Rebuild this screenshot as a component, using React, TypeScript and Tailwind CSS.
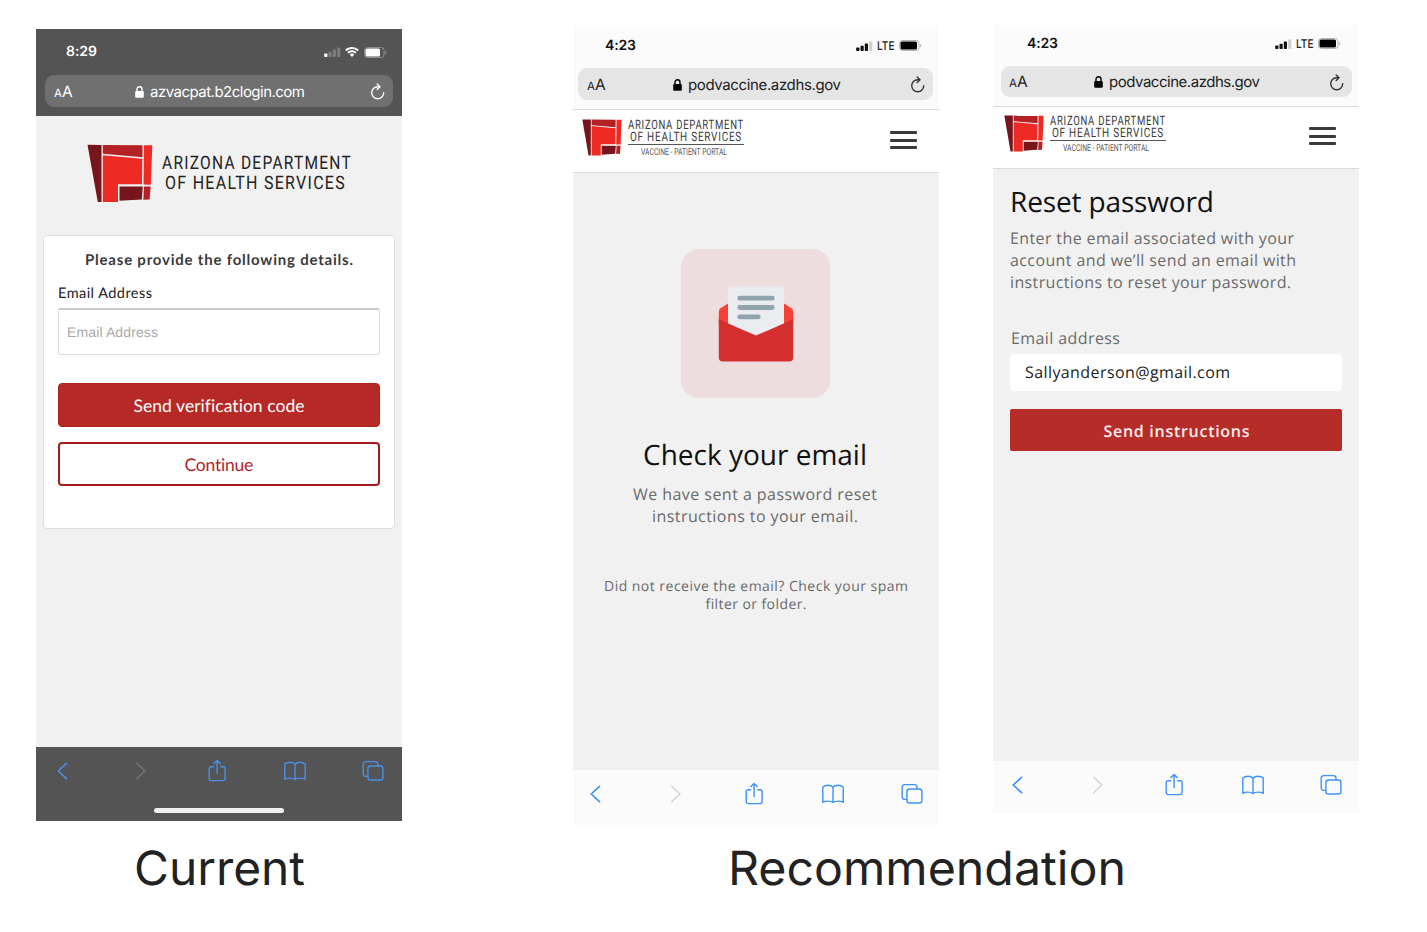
import { useLayoutEffect, useRef } from "react";
import type { ReactNode } from "react";

/** One line of text whose tracking (or horizontal scale) is set so that it fills a given width. */
function FitLine({
  width,
  stretch = false,
  className = "",
  children,
}: {
  width: number;
  stretch?: boolean;
  className?: string;
  children: string;
}) {
  const ref = useRef<HTMLSpanElement>(null);
  useLayoutEffect(() => {
    const el = ref.current;
    if (!el) return;
    el.style.letterSpacing = stretch ? "" : "0px";
    el.style.transform = "";
    const natural = el.getBoundingClientRect().width;
    if (stretch) {
      el.style.transform = `scaleX(${width / natural})`;
    } else {
      el.style.letterSpacing = `${(width - natural) / (children.length - 1)}px`;
    }
  }, [width, stretch, children]);
  return (
    <span className={`block shrink-0 ${className}`} style={{ width }}>
      <span ref={ref} className="block w-max origin-left whitespace-nowrap">
        {children}
      </span>
    </span>
  );
}

function Signal({ level, on, off }: { level: number; on: string; off: string }) {
  const bars = [3.5, 5.2, 7.4, 9.6];
  return (
    <svg width="17" height="10" viewBox="0 0 17 10" className="shrink-0">
      {bars.map((h, i) => (
        <rect key={h} x={i * 4.3 + 0.2} y={10 - h} width="3.200" height={h} rx="0.7" fill={i < level ? on : off} />
      ))}
    </svg>
  );
}

function Wifi() {
  return (
    <svg width="14" height="10" viewBox="0 0 14 10" className="shrink-0" fill="#fff">
      <path d="M7 0C4.3 0 1.9 1 .1 2.8l1.3 1.4A8 8 0 0 1 7 2a8 8 0 0 1 5.600 2.200l1.300-1.400A9.900 9.900 0 0 0 7 0Z" />
      <path d="M7 3.300c-1.800 0-3.400.700-4.600 1.900l1.300 1.400A4.800 4.800 0 0 1 7 5.200c1.300 0 2.400.5 3.300 1.400l1.300-1.400A6.600 6.600 0 0 0 7 3.300Z" />
      <path d="M7 6.500c-.9 0-1.700.4-2.300 1L7 10l2.300-2.500c-.6-.6-1.400-1-2.300-1Z" />
    </svg>
  );
}

function Battery({ fill, line, charge }: { fill: string; line: string; charge: number }) {
  return (
    <svg width="23" height="11" viewBox="0 0 23 11" className="shrink-0">
      <rect x="0.5" y="0.5" width="19.500" height="10" rx="2.800" fill="none" stroke={line} />
      <rect x="1.500" y="1.500" width={charge} height="8" rx="1.600" fill={fill} />
      <path d="M21.200 3.700c1.500.5 1.500 3.100 0 3.600Z" fill={line} />
    </svg>
  );
}

function Lock({ className }: { className: string }) {
  return (
    <svg width="9" height="12" viewBox="0 0 9 12" className={`shrink-0 ${className}`}>
      <rect x="0.200" y="5" width="8.600" height="6.800" rx="1.200" fill="currentColor" />
      <path d="M2 5.500V3.200a2.500 2.500 0 0 1 5 0v2.300" fill="none" stroke="currentColor" strokeWidth="1.400" />
    </svg>
  );
}

function Reload({ className }: { className: string }) {
  return (
    <svg
      width="15"
      height="17"
      viewBox="0 0 15 17"
      className={`shrink-0 ${className}`}
      fill="none"
      stroke="currentColor"
      strokeWidth="1.400"
      strokeLinecap="round"
      strokeLinejoin="round"
    >
      <path d="M9.600 3.700H7.600a6 6 0 1 0 6.100 6" />
      <path d="M7.200 1l2.800 2.800-2.800 2.800" />
    </svg>
  );
}

function TextSize({ className }: { className: string }) {
  return (
    <span className={`flex shrink-0 items-baseline leading-none ${className}`}>
      <span className="text-[11.500px]">A</span>
      <span className="text-[15.500px]">A</span>
    </span>
  );
}

function LogoMark({ className }: { className: string }) {
  return (
    <svg viewBox="0 0 66 60" preserveAspectRatio="none" className={`shrink-0 ${className}`}>
      <path d="M0.500 0.700L14.500 1 14.500 59 10.800 59Z" fill="#76151b" />
      <path d="M15.800 1L55.500 1.200 55.500 13.500 15.800 10Z" fill="#b52226" />
      <path d="M57 1.200L65.300 1.200 63.800 41.500 56.500 41.200Z" fill="#ee2a24" />
      <path d="M15.800 11.500L55.300 15 55 41 31 41 31 59 15.800 59Z" fill="#ee2a24" />
      <path d="M32.500 43.200L55.800 43.200 54.800 56.500 32.500 57.800Z" fill="#76151b" />
      <path d="M57 43.200L63.700 43.200 62.600 56.500 56.300 56.800Z" fill="#b52226" />
    </svg>
  );
}

const icon = {
  fill: "none",
  stroke: "currentColor",
  strokeWidth: 1.4,
  strokeLinecap: "round",
  strokeLinejoin: "round",
} as const;

function TabBar({ className, idle }: { className: string; idle: string }) {
  return (
    <nav className={`flex items-center justify-between ${className}`}>
      <svg width="22" height="24" viewBox="0 0 22 24" {...icon} strokeWidth={1.7}>
        <path d="M15.500 4.300L7.200 12l8.300 7.700" />
      </svg>
      <svg width="22" height="24" viewBox="0 0 22 24" {...icon} className={idle}>
        <path d="M8.700 4.300L17 12l-8.300 7.700" />
      </svg>
      <svg width="22" height="24" viewBox="0 0 22 24" {...icon}>
        <path d="M7.600 7.700H5.200A2 2 0 0 0 3.200 9.700v9.900a2 2 0 0 0 2 2h11.900a2 2 0 0 0 2-2V9.700a2 2 0 0 0-2-2h-2.400" />
        <path d="M11.100 14.500V1.500M7.900 4.600l3.200-3.200 3.200 3.200" />
      </svg>
      <svg width="22" height="24" viewBox="0 0 22 24" {...icon}>
        <path d="M11 5.300C9.900 3.900 8.200 3.300 6.200 3.300S2.200 3.800.8 5v15.300c1.500-.9 3.200-1.200 5-1.200 2.100 0 3.900.4 5.200 1.400 1.300-1 3.100-1.400 5.200-1.400 1.800 0 3.500.3 5 1.200V5c-1.400-1.200-3.400-1.700-5.400-1.700S12.100 3.900 11 5.300ZM11 5.300v15.200" />
      </svg>
      <svg width="22" height="24" viewBox="0 0 22 24" {...icon}>
        <rect x="5.900" y="7" width="15" height="14" rx="2.600" />
        <path d="M5.700 17.400H3.800a2.600 2.600 0 0 1-2.600-2.600V5.200a2.600 2.600 0 0 1 2.600-2.600h9.600A2.600 2.600 0 0 1 16 5.200v1.600" />
      </svg>
    </nav>
  );
}

function LightStatus({ className }: { className: string }) {
  return (
    <div className={`flex items-center ${className}`}>
      <FitLine width={31} className="font-['Inter',sans-serif] text-[14px] leading-5 font-semibold text-[#111]">
        4:23
      </FitLine>
      <span className="grow" />
      <Signal level={3} on="#111" off="#cfcfcf" />
      <FitLine width={17.500} stretch className="mr-[5px] ml-[4px] font-['Inter',sans-serif] text-[12px] leading-5 font-medium text-[#222]">
        LTE
      </FitLine>
      <Battery fill="#000" line="#b5b5b5" charge={16.500} />
    </div>
  );
}

function PortalHeader({ className }: { className: string }) {
  return (
    <header className={`flex items-start border-y border-[#dcdcdc] bg-white ${className}`}>
      <LogoMark className="h-[37px] w-[40px]" />
      <div className="mt-px ml-[6px] w-[116px] font-['Roboto',sans-serif] text-[#3a3a3a]">
        <FitLine width={116} stretch className="text-[13px] leading-[12px] tracking-[1px]">
          ARIZONA DEPARTMENT
        </FitLine>
        <FitLine width={112} stretch className="ml-[2px] text-[13px] leading-[12px] tracking-[1px]">
          OF HEALTH SERVICES
        </FitLine>
        <div className="h-px bg-[#555]" />
        <FitLine width={86} stretch className="mt-[2px] ml-[13px] text-[9.500px] leading-[12px] text-[#555]">
          VACCINE - PATIENT PORTAL
        </FitLine>
      </div>
      <span className="grow" />
      <div className="mt-[12px] flex w-[27px] flex-col gap-[4.500px]">
        <span className="h-[3px] rounded-[1px] bg-[#3a3a3a]" />
        <span className="h-[3px] rounded-[1px] bg-[#3a3a3a]" />
        <span className="h-[3px] rounded-[1px] bg-[#3a3a3a]" />
      </div>
    </header>
  );
}

function UrlBar({ className, children }: { className: string; children: ReactNode }) {
  return (
    <div className={`flex items-center rounded-[9px] font-['Inter',sans-serif] text-[15px] leading-5 ${className}`}>
      {children}
    </div>
  );
}

function CurrentPhone() {
  return (
    <div className="flex h-[792px] w-[366px] flex-col bg-[#f1f1f1]">
      <div className="h-[87px] bg-[#545454] px-[9px] text-white">
        <div className="flex h-[46px] items-center pr-[6px] pl-[21px]">
          <FitLine width={31} className="font-['Inter',sans-serif] text-[14px] leading-5 font-semibold">
            8:29
          </FitLine>
          <span className="grow" />
          <Signal level={1} on="#fff" off="#7c7c7c" />
          <span className="w-[4px]" />
          <Wifi />
          <span className="w-[5px]" />
          <Battery fill="#fff" line="#8d8d8d" charge={14.500} />
        </div>
        <UrlBar className="h-[32px] bg-[#707070] pt-px pr-[8px] pl-[9px]">
          <TextSize className="w-[81px]" />
          <Lock className="mr-[6px]" />
          <FitLine width={155}>azvacpat.b2clogin.com</FitLine>
          <span className="grow" />
          <Reload className="text-white" />
        </UrlBar>
      </div>
      <div className="flex h-[119px] pt-[28px] pl-[51px]">
        <LogoMark className="h-[59px] w-[66px]" />
        <div className="ml-[9px] pt-[9px] font-['Roboto',sans-serif] text-[18.500px] leading-5 tracking-[1.500px] text-[#222]">
          <FitLine width={190} stretch>
            ARIZONA DEPARTMENT
          </FitLine>
          <FitLine width={181} stretch className="ml-[3px]">
            OF HEALTH SERVICES
          </FitLine>
        </div>
      </div>
      <form className="mx-[7px] flex h-[294px] flex-col rounded-[4px] border border-[#dedede] bg-white px-[14px] pt-[14px] font-['Lato',sans-serif]">
        <FitLine width={268} className="ml-[27px] text-[15px] leading-5 font-bold text-[#3a3a3a]">
          Please provide the following details.
        </FitLine>
        <FitLine width={94} className="mt-[14px] text-[14.500px] leading-5 text-[#222]">
          Email Address
        </FitLine>
        <div className="mt-[4px] flex h-[47px] items-center rounded-[2px] border border-t-2 border-[#dadada] border-t-[#c8c8c8] pl-[8px]">
          <FitLine width={91} className="font-['Liberation_Sans',sans-serif] text-[14px] leading-5 text-[#a9a9a9]">
            Email Address
          </FitLine>
        </div>
        <div className="mt-[28px] flex h-[44px] items-center justify-center rounded-[4px] border border-[#b3211f] bg-[#b72926] pt-px text-white">
          <FitLine width={171} className="text-[17.500px] leading-6">
            Send verification code
          </FitLine>
        </div>
        <div className="mt-[15px] flex h-[44px] items-center justify-center rounded-[4px] border-2 border-[#a9191d] pt-px text-[#b42328]">
          <FitLine width={69} className="text-[17.500px] leading-6">
            Continue
          </FitLine>
        </div>
      </form>
      <span className="grow" />
      <div className="flex h-[74px] flex-col items-center bg-[#545454]">
        <TabBar className="h-[47px] w-full pr-[18px] pl-[14.500px] text-[#4a8ee8]" idle="text-[#767676]" />
        <span className="mt-[14px] h-[5px] w-[130px] rounded-full bg-[#f0f0f0]" />
      </div>
    </div>
  );
}

function Envelope() {
  return (
    <svg width="76" height="76" viewBox="0 0 76 76">
      <path d="M0.800 26Q0.800 23.500 2.500 22.300L10 17.500H66L73.500 22.300Q75.200 23.500 75.200 26V40H0.800Z" fill="#f44336" />
      <path d="M10 3.500a3 3 0 0 1 3-3H63a3 3 0 0 1 3 3V37.500L38 49.500 10 37.500Z" fill="#eaecf0" />
      <path d="M0.800 33L10 37.500 38 49.500 66 37.500 75.200 33V71.500a4 4 0 0 1-4 4H4.800a4 4 0 0 1-4-4Z" fill="#d32f2f" />
      <g stroke="#90a4ae" strokeWidth="4.800" strokeLinecap="round">
        <path d="M21.700 12.200H54.300M21.700 21.500H54.300M21.700 30.800H40.300" />
      </g>
    </svg>
  );
}

function CheckEmailPhone() {
  return (
    <div className="flex h-[800px] w-[366px] flex-col bg-[#f1f1f1] font-['Open_Sans',sans-serif]">
      <div className="h-[84px] bg-[#fbfbfb]">
        <LightStatus className="h-[43px] pr-[17px] pb-[2px] pl-[32px]" />
        <UrlBar className="ml-[5px] h-[32px] w-[355px] bg-[#e5e5e5] pt-px pr-[8px] pl-[9px] text-[#222]">
          <TextSize className="w-[86px]" />
          <Lock className="mr-[6px] text-black" />
          <FitLine width={153}>podvaccine.azdhs.gov</FitLine>
          <span className="grow" />
          <Reload className="text-[#333]" />
        </UrlBar>
      </div>
      <PortalHeader className="h-[64px] pt-[9px] pr-[22px] pl-[9px]" />
      <main className="flex grow flex-col items-center pt-[76px] pr-[2px]">
        <div className="flex h-[149px] w-[149px] items-center justify-center rounded-[18px] bg-[#eedddf] pl-px">
          <Envelope />
        </div>
        <FitLine width={224} className="mt-[37px] text-[28px] leading-10 text-[#111]">
          Check your email
        </FitLine>
        <FitLine width={244} className="mt-[8px] text-[16px] leading-[22px] text-[#6a6a6a]">
          We have sent a password reset
        </FitLine>
        <FitLine width={206} className="text-[16px] leading-[22px] text-[#6a6a6a]">
          instructions to your email.
        </FitLine>
        <FitLine width={304} className="mt-[51px] ml-[2px] text-[14px] leading-[18px] text-[#6a6a6a]">
          Did not receive the email? Check your spam
        </FitLine>
        <FitLine width={101} className="ml-[2px] text-[14px] leading-[18px] text-[#6a6a6a]">
          filter or folder.
        </FitLine>
      </main>
      <TabBar className="h-[55px] bg-[#fbfbfb] pr-[16px] pb-[7px] pl-[11px] text-[#3c92fb]" idle="text-[#d2d2d4]" />
    </div>
  );
}

function ResetPhone() {
  return (
    <div className="flex h-[789px] w-[366px] flex-col bg-[#f1f1f1] font-['Open_Sans',sans-serif]">
      <div className="h-[81px] bg-[#fbfbfb]">
        <LightStatus className="h-[41px] pr-[18px] pb-[4px] pl-[34px]" />
        <UrlBar className="ml-[8px] h-[31px] w-[351px] bg-[#e5e5e5] pt-px pr-[8px] pl-[8px] text-[#222]">
          <TextSize className="w-[85px]" />
          <Lock className="mr-[6px] text-black" />
          <FitLine width={151}>podvaccine.azdhs.gov</FitLine>
          <span className="grow" />
          <Reload className="text-[#333]" />
        </UrlBar>
      </div>
      <PortalHeader className="h-[63px] pt-[8px] pr-[23px] pl-[10.500px]" />
      <main className="flex grow flex-col px-[17px] pt-[13px]">
        <FitLine width={204} className="text-[28px] leading-10 text-[#111]">
          Reset password
        </FitLine>
        <div className="mt-[5px] text-[16px] leading-[22px] text-[#6a6a6a]">
          <FitLine width={284}>Enter the email associated with your</FitLine>
          <FitLine width={286}>account and we’ll send an email with</FitLine>
          <FitLine width={281}>instructions to reset your password.</FitLine>
        </div>
        <FitLine width={109} className="mt-[34px] ml-px text-[16px] leading-[22px] text-[#6a6a6a]">
          Email address
        </FitLine>
        <div className="mt-[5px] flex h-[37px] items-center rounded-[4px] bg-white pb-px pl-[15px]">
          <FitLine width={205} className="text-[16px] leading-[22px] text-[#222]">
            Sallyanderson@gmail.com
          </FitLine>
        </div>
        <div className="mt-[18px] flex h-[42px] items-center justify-center rounded-[2px] bg-[#b62c28] pt-px pl-px">
          <FitLine width={146} className="text-[16px] leading-[22px] font-semibold text-[#fbeeee]">
            Send instructions
          </FitLine>
        </div>
      </main>
      <TabBar className="h-[53px] bg-[#fbfbfb] pr-[17px] pb-[6px] pl-[13px] text-[#3c92fb]" idle="text-[#d2d2d4]" />
    </div>
  );
}

export default function App() {
  return (
    <div className="flex h-[932px] w-[1427px] items-start overflow-hidden bg-white pl-[36px] [text-rendering:geometricPrecision]">
      <figure className="flex flex-col items-center pt-[29px]">
        <CurrentPhone />
        <figcaption className="mt-[18px] font-['Inter',sans-serif] text-[47px] leading-[60px] text-[#222]">
          <FitLine width={171} stretch>
            Current
          </FitLine>
        </figcaption>
      </figure>
      <figure className="ml-[171px] flex flex-col pt-[25px]">
        <div className="flex items-start gap-[54px]">
          <CheckEmailPhone />
          <ResetPhone />
        </div>
        <figcaption className="mt-[14px] ml-[155px] font-['Inter',sans-serif] text-[47px] leading-[60px] text-[#222]">
          <FitLine width={398} stretch>
            Recommendation
          </FitLine>
        </figcaption>
      </figure>
    </div>
  );
}
